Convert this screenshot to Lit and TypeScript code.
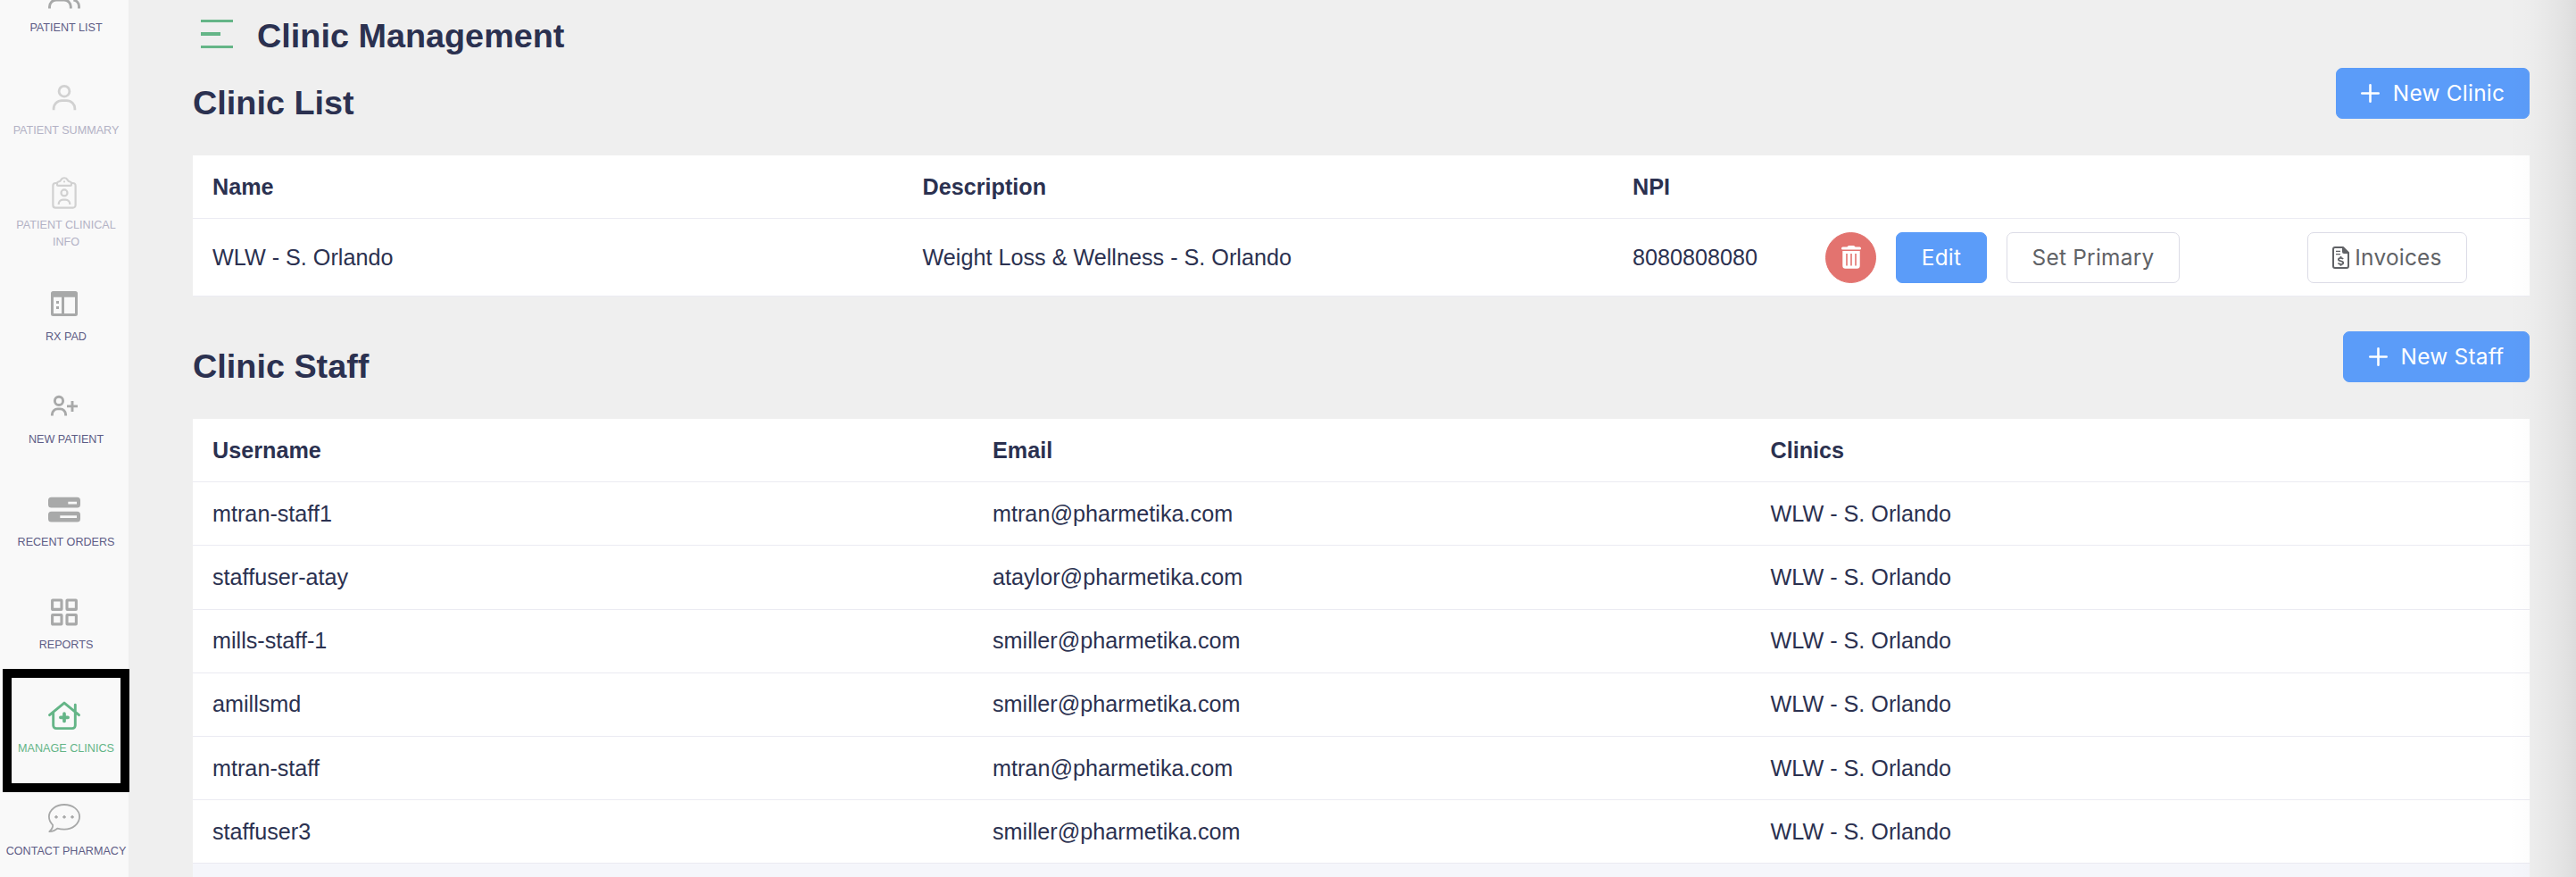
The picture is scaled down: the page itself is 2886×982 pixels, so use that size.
import { LitElement, html, css, svg } from "lit";
import { customElement, property } from "lit/decorators.js";
import { classMap } from "lit/directives/class-map.js";

type NavItem = { icon: string; label: string; state?: "disabled" | "active" };

const NAV: NavItem[] = [
  { icon: "users", label: "Patient List" },
  { icon: "user", label: "Patient Summary", state: "disabled" },
  { icon: "clipboard", label: "Patient Clinical Info", state: "disabled" },
  { icon: "rx", label: "RX Pad" },
  { icon: "userPlus", label: "New Patient" },
  { icon: "orders", label: "Recent Orders" },
  { icon: "grid", label: "Reports" },
  { icon: "clinic", label: "Manage Clinics", state: "active" },
  { icon: "chat", label: "Contact Pharmacy" },
];

const STAFF = [
  ["mtran-staff1", "mtran@pharmetika.com"],
  ["staffuser-atay", "ataylor@pharmetika.com"],
  ["mills-staff-1", "smiller@pharmetika.com"],
  ["amillsmd", "smiller@pharmetika.com"],
  ["mtran-staff", "mtran@pharmetika.com"],
  ["staffuser3", "smiller@pharmetika.com"],
];

const ICONS: Record<string, unknown> = {
  users: svg`<g stroke-width="2.9">
    <circle cx="13.5" cy="11" r="6.5"/>
    <path d="M1.5 33.6v-2.2a7.4 7.4 0 0 1 7.4-7.4h9a7.4 7.4 0 0 1 7.4 7.4v2.2M24 5a6.5 6.5 0 0 1 0 12.4M28.3 24a7 7 0 0 1 6.2 7.2v2.4"/></g>`,
  user: svg`<g stroke-width="2.8">
    <circle cx="18" cy="11.2" r="5.9"/>
    <path d="M6.1 32.3v-1.5a9.2 9.2 0 0 1 9.2-9.2h5.4a9.2 9.2 0 0 1 9.2 9.2v1.5"/></g>`,
  clipboard: svg`<g stroke-width="2.2">
    <path d="M10 8H8.2a2.8 2.8 0 0 0-2.8 2.8v22a2.8 2.8 0 0 0 2.8 2.8h19.6a2.8 2.8 0 0 0 2.8-2.8v-22A2.8 2.8 0 0 0 27.800 8H26"/>
    <path d="M10 8.200c0-1 .6-1.500 1.500-1.700 1.500-.3 2.300-1 3-2.300 1.600-2.600 5.400-2.600 7 0 .7 1.300 1.500 2 3 2.300.9.200 1.500.700 1.500 1.700v1.300c0 .8-.6 1.400-1.400 1.400H11.400c-.8 0-1.400-.6-1.400-1.400z"/>
    <circle cx="18" cy="18.900" r="3.500"/>
    <path d="M11.700 32v-.6a4.800 4.800 0 0 1 4.800-4.800h3a4.800 4.800 0 0 1 4.800 4.800v.6"/></g>
    <circle cx="18" cy="6.400" r="1.100" fill="currentColor" stroke="none"/>`,
  rx: svg`<g fill="currentColor" stroke="none">
    <path fill-rule="evenodd" d="M5.500 4h25A2.500 2.500 0 0 1 33 6.500v23a2.500 2.500 0 0 1-2.500 2.500h-25A2.500 2.500 0 0 1 3 29.500v-23A2.500 2.500 0 0 1 5.500 4zM6 10.700v18.300h9V10.700zM18 10.700v18.300h12V10.700z"/>
    <path d="M9 15h3v3H9zM9 21h3v3H9z"/></g>`,
  userPlus: svg`<g stroke-width="2.900">
    <circle cx="12" cy="11.900" r="4.600"/>
    <path d="M4.400 28.600v-1.500a6.200 6.200 0 0 1 6.200-6.200h2.800a6.200 6.200 0 0 1 6.200 6.200v1.500M21 17.900h12M27 11.900v12"/></g>`,
  orders: svg`<path fill="currentColor" stroke="none" fill-rule="evenodd"
    d="M3.500 4.700h29A3.500 3.500 0 0 1 36 8.200v4.700a3.500 3.500 0 0 1-3.500 3.500h-29A3.500 3.500 0 0 1 0 12.900V8.200a3.500 3.500 0 0 1 3.500-3.500zM22.300 9.700v2.700H32V9.700zM3.500 20.700h29a3.500 3.500 0 0 1 3.500 3.500v4.700a3.500 3.500 0 0 1-3.500 3.500h-29A3.500 3.500 0 0 1 0 28.900v-4.700a3.500 3.500 0 0 1 3.500-3.500zM13.300 25.300v2.700H32v-2.700z"/>`,
  grid: svg`<g stroke-width="3.100">
    <rect x="4.600" y="5" width="10.400" height="10.400" rx=".4"/><rect x="21" y="5" width="10.400" height="10.400" rx=".4"/>
    <rect x="4.600" y="21.500" width="10.400" height="10.400" rx=".4"/><rect x="21" y="21.500" width="10.400" height="10.400" rx=".4"/></g>`,
  clinic: svg`<g stroke-width="2.900" stroke-linecap="round" stroke-linejoin="round">
    <path d="M1.500 17.600 18 4.100l16.500 13.500M5.700 14.500v14.800a3.300 3.300 0 0 0 3.300 3.300h18a3.300 3.300 0 0 0 3.300-3.300V6.200"/>
    <path stroke-width="3.700" d="M18 16.200v8.200M13.900 20.300h8.200"/></g>`,
  chat: svg`<path stroke-width="1.800" stroke-linejoin="round"
    d="M18 3C8.500 3 .9 9 .9 16.600c0 3.800 1.700 6.700 4.300 9.200.1 2.600-1.200 5-3.900 7.400 3.600-.1 6.400-1 8.900-3.500 2.500.6 5 .9 7.800.9 9.500 0 17.100-6.300 17.100-14S27.500 3 18 3z"/>
    <path stroke-width="1.700" d="M9 15v3.600M7.200 16.800h3.600M18 15v3.600M16.200 16.800h3.600M27 15v3.600M25.200 16.800h3.600"/>`,
};

@customElement("side-nav")
class SideNav extends LitElement {
  static styles = css`
    :host { display: block; width: 144px; height: 100%; background: #f9f9f9; overflow: hidden; }
    .list { display: grid; grid-auto-rows: 115.2px; margin-top: -48.8px; }
    .item { display: flex; flex-direction: column; align-items: center; justify-content: center; gap: 10px; color: #a8a9a9; }
    .icon { width: 36px; height: 36px; flex: none; overflow: visible; fill: none; stroke: currentColor; }
    .label { width: 140px; margin-left: 4px; box-sizing: border-box; text-align: center; text-transform: uppercase; white-space: nowrap;
      font-size: 12.6px; line-height: 19px; color: #5d5c85; }
    .disabled { color: #d1d1d1; }
    .disabled .label { color: #b3b2c5; padding: 0 10px; white-space: normal; }
    .active, .active .label { color: #64b587; }
  `;
  render() {
    return html`<nav class="list">${NAV.map((n) => html`
      <div class=${classMap({ item: true, disabled: n.state === "disabled", active: n.state === "active" })}>
        <svg class="icon" viewBox="0 0 36 36">${ICONS[n.icon]}</svg>
        <span class="label">${n.label}</span>
      </div>`)}</nav>`;
  }
}

@customElement("ui-button")
class UiButton extends LitElement {
  @property() kind = "primary";
  @property() icon = "";
  static styles = css`
    :host { display: block; }
    .btn { display: flex; align-items: center; justify-content: center; width: 100%; height: 57px; box-sizing: border-box; padding: 0;
      border: 1px solid #5b9cf9; border-radius: 7px; background: #5b9cf9; color: #fff; white-space: nowrap;
      font-family: Inter, "Liberation Sans", sans-serif; font-size: 24.4px; font-weight: 400; letter-spacing: .25px; line-height: 57px; }
    .plain { background: #fff; border-color: #dcdce6; color: #606266; }
    .danger { border-radius: 50%; background: #e3736f; border-color: #e3736f; }
    .plus { width: 21px; height: 21px; margin-right: 15px; }
    .trash { width: 22px; height: 26px; }
    .doc { width: 19px; height: 25px; margin-right: 6px; }
  `;
  glyph() {
    if (this.icon === "plus") return html`<svg class="plus" viewBox="0 0 21 21" fill="none" stroke="currentColor" stroke-width="2.6" stroke-linecap="round"><path d="M10.500 1.300v18.400M1.300 10.500h18.400"/></svg>`;
    if (this.icon === "trash") return html`<svg class="trash" viewBox="0 0 22 26" fill="currentColor"><path d="M6.500 1.500Q7 0 8.500 0h5q1.500 0 2 1.500h5Q22 1.500 22 3.200q0 1.300-1.200 1.300H1.200Q0 4.500 0 3.200 0 1.500 1.500 1.500z"/><path fill-rule="evenodd" d="M1.300 6h19.400v16.500q0 3.200-3.200 3.200h-13q-3.200 0-3.200-3.200zM5.200 9v13.400h1.600V9zM10.200 9v13.400h1.600V9zM15.200 9v13.400h1.600V9z"/></svg>`;
    if (this.icon === "doc") return html`<svg class="doc" viewBox="0 0 19 25" fill="none" stroke="currentColor"><path stroke-width="2" stroke-linejoin="round" d="M3 1h9l6 6v15a2 2 0 0 1-2 2H3a2 2 0 0 1-2-2V3a2 2 0 0 1 2-2z"/><path fill="currentColor" stroke="none" d="M11 1h1.500L18.500 7v1H13a2 2 0 0 1-2-2z"/><path stroke-width="1.200" d="M4 5.300h5M4 8.700h5"/><path stroke-width="1.800" d="M12.100 14c-.6-.9-1.500-1.200-2.700-1.200-1.600 0-2.500.7-2.500 1.700 0 2.600 5.300 1.100 5.300 3.700 0 1.100-1 1.800-2.700 1.800-1.400 0-2.400-.5-3-1.400M9.500 11v1.800M9.500 20v1.800"/></svg>`;
    return "";
  }
  render() {
    return html`<button class=${classMap({ btn: true, plain: this.kind === "plain", danger: this.kind === "danger" })}>${this.glyph()}<slot></slot></button>`;
  }
}

@customElement("app-root")
class AppRoot extends LitElement {
  static styles = css`
    :host { display: block; width: 2886px; height: 982px; overflow: hidden; position: relative; background: #efefef; color: #2b3150;
      font-family: "Liberation Sans", Arial, sans-serif; font-size: 25.2px; }
    .shell { display: grid; grid-template-columns: 144px 1fr; height: 982px; }
    .main { padding: 0 52px 0 72px; overflow: hidden; }
    .bar { display: flex; align-items: center; height: 76px; box-sizing: border-box; padding: 4px 0 0 9px; gap: 27px; }
    .menu { width: 36px; height: 32px; margin-bottom: 4px; fill: #64b587; }
    .title { margin: 0; font-size: 37.8px; font-weight: 700; line-height: 77px; }
    .head .title { line-height: 79px; }
    .head { display: flex; justify-content: space-between; align-items: flex-start; height: 98px; }
    .row { display: grid; align-items: center; background: #fff; border-bottom: 1px solid #ebebf2; box-sizing: border-box; }
    .cell { padding-left: 22px; white-space: nowrap; }
    .th { font-weight: 700; }
    .clinics { margin-bottom: 39px; }
    .clinics .row { grid-template-columns: 795.5px 795.5px 231px 1fr; height: 87px; }
    .clinics .row.th { height: 71px; }
    .staff .row { grid-template-columns: 874px 871.5px 1fr; height: 71.2px; }
    .staff .next { background: #f5f6fb; }
    .actions { display: flex; align-items: center; padding-left: 7px; }
    .trash { width: 57px; margin-right: 22px; }
    .edit { width: 102px; margin-right: 22px; }
    .primary { width: 194px; margin-right: 143px; }
    .invoices { width: 179px; }
    .new-clinic { width: 217px; }
    .new-staff { width: 209px; }
    .focus { position: absolute; left: 3px; top: 749px; width: 142px; height: 138px; box-sizing: border-box; border: 10px solid #000; }
    .shade { position: absolute; right: 0; top: 0; width: 78px; height: 100%; pointer-events: none;
      background: linear-gradient(to right, rgba(0,0,0,0), rgba(0,0,0,.008) 32%, rgba(0,0,0,.03) 60%, rgba(0,0,0,.055) 85%, rgba(0,0,0,.08)); }
  `;
  render() {
    return html`
      <div class="shell">
        <side-nav></side-nav>
        <main class="main">
          <header class="bar">
            <svg class="menu" viewBox="0 0 36 32"><path d="M0 0h36v3H0zM0 14h22v4H0zM0 29h36v3H0z"/></svg>
            <h1 class="title">Clinic Management</h1>
          </header>
          <div class="head"><h2 class="title">Clinic List</h2><ui-button class="new-clinic" icon="plus">New Clinic</ui-button></div>
          <section class="clinics">
            <div class="row th"><div class="cell">Name</div><div class="cell">Description</div><div class="cell">NPI</div><div></div></div>
            <div class="row">
              <div class="cell">WLW - S. Orlando</div>
              <div class="cell">Weight Loss &amp; Wellness - S. Orlando</div>
              <div class="cell">8080808080</div>
              <div class="actions">
                <ui-button class="trash" kind="danger" icon="trash"></ui-button>
                <ui-button class="edit">Edit</ui-button>
                <ui-button class="primary" kind="plain">Set Primary</ui-button>
                <ui-button class="invoices" kind="plain" icon="doc">Invoices</ui-button>
              </div>
            </div>
          </section>
          <div class="head"><h2 class="title">Clinic Staff</h2><ui-button class="new-staff" icon="plus">New Staff</ui-button></div>
          <section class="staff">
            <div class="row th"><div class="cell">Username</div><div class="cell">Email</div><div class="cell">Clinics</div></div>
            ${STAFF.map(([name, email]) => html`<div class="row"><div class="cell">${name}</div><div class="cell">${email}</div><div class="cell">WLW - S. Orlando</div></div>`)}
            <div class="row next"></div>
          </section>
        </main>
      </div>
      <div class="focus"></div>
      <div class="shade"></div>`;
  }
}
